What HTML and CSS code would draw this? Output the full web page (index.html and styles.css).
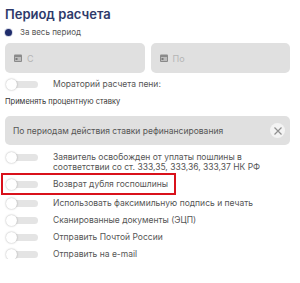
FILE: index.html
```html
<!DOCTYPE html>
<html lang="ru">
<head>
    <meta charset="UTF-8">
    <title>Период расчета</title>
    <link rel="stylesheet" href="styles.css">
</head>
<body>
    <div class="panel">
        <h2 class="title">Период расчета</h2>

        <label class="radio-row">
            <span class="radio"></span>
            <span>За весь период</span>
        </label>

        <div class="dates">
            <div class="field">
                <svg class="cal" width="8" height="8" viewBox="0 0 8 8"><rect x="0" y="0.5" width="8" height="7.5" rx="1" fill="#8a8a8a"/><rect x="1" y="3" width="6" height="4" fill="#bcbcbc"/><rect x="1.5" y="4" width="2" height="2" fill="#7a7a7a"/></svg>
                <span>С</span>
            </div>
            <div class="field">
                <svg class="cal" width="8" height="8" viewBox="0 0 8 8"><rect x="0" y="0.5" width="8" height="7.5" rx="1" fill="#8a8a8a"/><rect x="1" y="3" width="6" height="4" fill="#bcbcbc"/><rect x="1.5" y="4" width="2" height="2" fill="#7a7a7a"/></svg>
                <span>По</span>
            </div>
        </div>

        <div class="toggle-row single">
            <span class="toggle"></span>
            <span>Мораторий расчета пени:</span>
        </div>

        <div class="label">Применять процентную ставку</div>

        <div class="select">
            <span>По периодам действия ставки рефинансирования</span>
            <span class="clear">
                <svg width="10" height="10" viewBox="0 0 10 10"><path d="M1.5 1.5 L8.5 8.5 M8.5 1.5 L1.5 8.5" stroke="#8f8f8f" stroke-width="1.2" fill="none"/></svg>
            </span>
        </div>

        <div class="toggles">
            <div class="toggle-row">
                <span class="toggle"></span>
                <span>Заявитель освобожден от уплаты пошлины в соответствии со ст. 333,35, 333,36, 333,37 НК РФ</span>
            </div>
            <div class="toggle-row marked">
                <span class="toggle"></span>
                <span>Возврат дубля госпошлины</span>
            </div>
            <div class="toggle-row">
                <span class="toggle"></span>
                <span>Использовать факсимильную подпись и печать</span>
            </div>
            <div class="toggle-row">
                <span class="toggle"></span>
                <span>Сканированные документы (ЭЦП)</span>
            </div>
            <div class="toggle-row">
                <span class="toggle"></span>
                <span>Отправить Почтой России</span>
            </div>
            <div class="toggle-row">
                <span class="toggle"></span>
                <span>Отправить на e-mail</span>
            </div>
        </div>
    </div>
</body>
</html>
```

FILE: styles.css
```css
body {
    margin: 0;
    background-color: #fff;
    font-family: Inter, "Noto Sans", sans-serif;
    color: #555;
}

.panel {
    padding: 5px 10px 0 5px;
}

.title {
    margin: 0;
    font-size: 13px;
    font-weight: 600;
    line-height: 18px;
    color: #2e3a6a;
}

.radio-row {
    display: flex;
    align-items: center;
    gap: 8px;
    height: 18px;
    font-size: 8px;
    color: #555;
}

.radio {
    width: 7px;
    height: 7px;
    border-radius: 50%;
    background-color: #1f2c6b;
    box-shadow: 0 0 0 1px #d5d8e6;
}

.dates {
    display: flex;
    gap: 6px;
    margin-top: 2px;
}

.field {
    flex: 1;
    height: 30px;
    display: flex;
    align-items: center;
    gap: 5px;
    padding: 0 9px;
    background-color: #e0e0e0;
    border-radius: 5px;
    font-size: 9px;
    color: #b5b5b5;
}

.toggle-row {
    display: flex;
    align-items: flex-start;
    gap: 15px;
    font-size: 8.5px;
    line-height: 10px;
    color: #555;
}

.toggle-row.single {
    margin-top: 6px;
    align-items: center;
}

.toggle {
    position: relative;
    flex: none;
    width: 28px;
    height: 7px;
    margin: 1.5px 0 0 5px;
    border-radius: 4px;
    background-color: #e4e4e4;
}

.toggle::before {
    content: "";
    position: absolute;
    left: -4px;
    top: -2px;
    width: 11px;
    height: 11px;
    border-radius: 50%;
    background-color: #fff;
    box-shadow: 0 0 2px rgba(0, 0, 0, 0.35);
}

.label {
    margin-top: 8px;
    font-size: 7.5px;
    line-height: 10px;
    color: #333;
}

.select {
    display: flex;
    align-items: center;
    justify-content: space-between;
    height: 29px;
    margin-top: 9px;
    padding: 0 5px 0 8px;
    background-color: #e0e0e0;
    border-radius: 5px;
    font-size: 8.5px;
    color: #555;
}

.clear {
    display: flex;
    align-items: center;
    justify-content: center;
    width: 15px;
    height: 15px;
    border-radius: 50%;
    background-color: #f3f3f3;
}

.toggles {
    display: flex;
    flex-direction: column;
    gap: 7px;
    margin-top: 7px;
}

.marked {
    box-sizing: border-box;
    width: 171px;
    margin: -4px 0 -2px -2px;
    padding: 4px 0 4px 2px;
    outline: 2px solid #d9111b;
}
```
